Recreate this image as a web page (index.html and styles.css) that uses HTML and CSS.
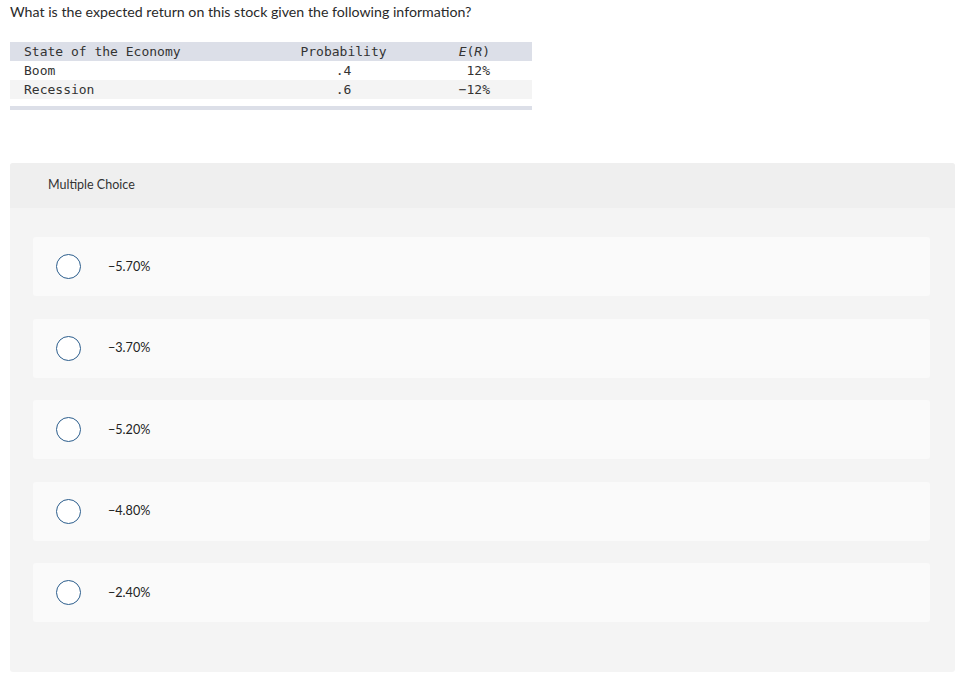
FILE: index.html
```html
<!DOCTYPE html>
<html>
<head>
<meta charset="utf-8">
<link rel="stylesheet" href="styles.css">
</head>
<body>
<div class="page">
  <p class="question">What is the expected return on this stock given the following information?</p>
  <div class="table">
    <div class="row head">
      <span class="c1">State of the Economy</span>
      <span class="c2">Probability</span>
      <span class="c3"><i>E</i>(<i>R</i>)</span>
    </div>
    <div class="row">
      <span class="c1">Boom</span>
      <span class="c2">.4</span>
      <span class="c3">12%</span>
    </div>
    <div class="row alt">
      <span class="c1">Recession</span>
      <span class="c2">.6</span>
      <span class="c3">−12%</span>
    </div>
    <div class="foot"></div>
  </div>

  <div class="panel">
    <div class="panel-head">Multiple Choice</div>
    <div class="choices">
      <div class="choice"><span class="radio"></span><span class="label">−5.70%</span></div>
      <div class="choice"><span class="radio"></span><span class="label">−3.70%</span></div>
      <div class="choice"><span class="radio"></span><span class="label">−5.20%</span></div>
      <div class="choice"><span class="radio"></span><span class="label">−4.80%</span></div>
      <div class="choice"><span class="radio"></span><span class="label">−2.40%</span></div>
    </div>
  </div>
</div>
</body>
</html>
```

FILE: styles.css
```css
* { box-sizing: border-box; }
html, body { margin: 0; padding: 0; background: #fff; }
body {
  font-family: "Lato", "Open Sans", sans-serif;
  color: #222;
}
.page {
  padding: 0 10px 0 10px;
  width: 955px;
}
.question {
  margin: 0;
  padding-top: 4px;
  font-size: 14.2px;
  line-height: 16px;
  color: #2a2a2a;
}
.table {
  margin-top: 22px;
  width: 522px;
  font-family: "DejaVu Sans Mono", "Liberation Mono", monospace;
  font-size: 13px;
  color: #333;
}
.row {
  display: grid;
  grid-template-columns: 258px 151px 113px;
  height: 19px;
  align-items: center;
  background: #fff;
}
.row.head { background: #dcdfe8; }
.row.alt { background: #f4f4f4; }
.c1 { padding-left: 14px; }
.c2 { text-align: center; }
.c3 { text-align: right; padding-right: 42px; }
.c3 i { font-style: italic; }
.foot {
  margin-top: 7px;
  height: 4px;
  background: #dcdfe8;
}
.panel {
  margin-top: 53px;
  width: 945px;
  background: #f4f4f4;
  border-radius: 3px;
  overflow: hidden;
}
.panel-head {
  height: 45px;
  background: #efefef;
  display: flex;
  align-items: center;
  padding-left: 38px;
  padding-bottom: 3px;
  font-size: 12.5px;
  color: #333;
}
.choices {
  display: flex;
  flex-direction: column;
  gap: 22.5px;
  padding: 29px 25px 49.5px 23px;
}
.choice {
  height: 59px;
  background: #fafafa;
  border-radius: 3px;
  display: flex;
  align-items: center;
  padding-left: 23px;
}
.radio {
  width: 25px;
  height: 25px;
  border-radius: 50%;
  border: 1.5px solid #2b5d8c;
  background: #fff;
  flex: none;
}
.label {
  margin-left: 27px;
  margin-bottom: 1px;
  font-size: 12.6px;
  color: #222;
}
```
